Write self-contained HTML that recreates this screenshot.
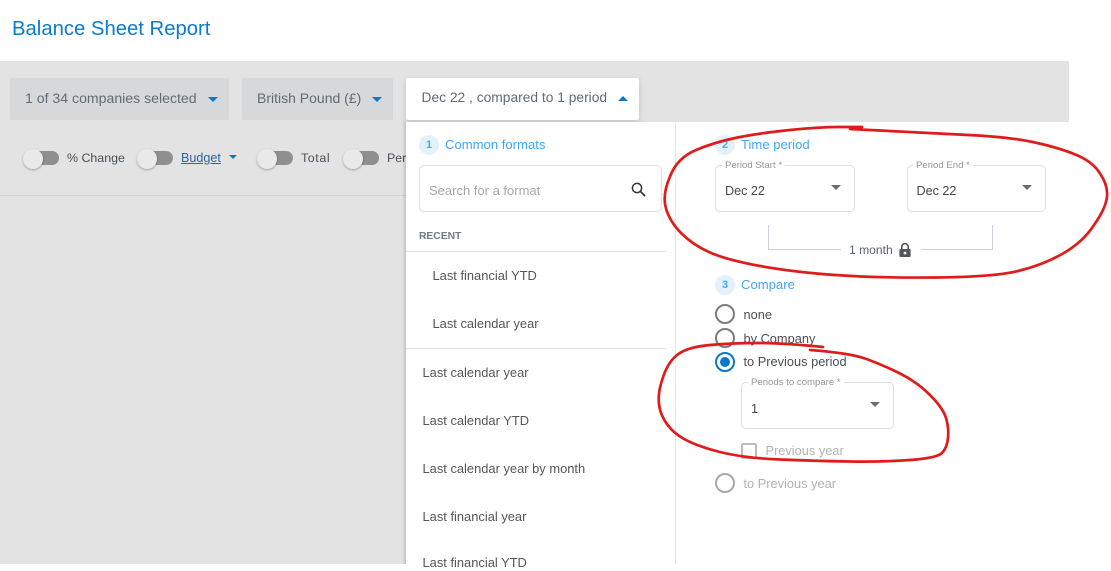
<!DOCTYPE html>
<html><head><meta charset="utf-8">
<style>
*{box-sizing:border-box}
html,body{margin:0;padding:0;width:1111px;height:564px;overflow:hidden;background:#fff;font-family:"Liberation Sans",sans-serif}
.a{position:absolute;white-space:nowrap}
.t{font-size:13px;line-height:16px}
.b{font-size:14px;color:#626b78}
.s{font-size:12.400px;color:#4a5058}
.tri{position:absolute;width:0;height:0;border-left:5px solid transparent;border-right:5px solid transparent;border-top:5px solid #0a78c8}
.btn{position:absolute;top:78px;height:42px;background:#d7d8da;border-radius:2px}
.sw{position:absolute;top:150px;width:36px;height:15px}
.sw i{position:absolute;left:10px;top:1px;width:26px;height:14px;border-radius:7px;background:#8f8f8f}
.sw b{position:absolute;left:0;top:-1px;width:20px;height:20px;border-radius:50%;background:#e9e9e9;box-shadow:0 1px 2px rgba(0,0,0,.3)}
.num{position:absolute;width:20px;height:20px;border-radius:50%;background:#e3f1fb;color:#4aa8ee;font-size:11px;font-weight:bold;line-height:20px;text-align:center}
.head{color:#42a5f5;font-size:13.100px;line-height:16px}
.fs{position:absolute;border:1px solid #dfdfe2;border-radius:5px;background:#fff}
.lab{position:absolute;background:#fff;color:#949494;font-size:9.600px;line-height:12px;padding:0 3px;white-space:nowrap}
.val{position:absolute;color:#484848;font-size:12.600px;line-height:16px}
.g{position:absolute;width:0;height:0;border-left:5.500px solid transparent;border-right:5.500px solid transparent;border-top:5.500px solid #6a6d72}
.item{color:#565656;font-size:12.900px;line-height:16px}
.r{position:absolute;width:20px;height:20px;border-radius:50%;border:2px solid #7c7c7c;background:#fff}
.rt{color:#4a4f56;font-size:12.800px;line-height:16px}
</style></head>
<body>
<div class="a" style="left:12px;top:16px;font-size:20.300px;line-height:26px;color:#0a7ccd">Balance Sheet Report</div>

<div class="a" style="left:0;top:61px;width:1069px;height:503px;background:#e3e3e3"></div>
<div class="a" style="left:0;top:195px;width:406px;height:1px;background:#d2d2d2"></div>

<div class="btn" style="left:10px;width:219px"></div>
<div class="a t b" style="left:25px;top:90px;font-size:14.100px">1 of 34 companies selected</div>
<div class="tri" style="left:208px;top:97px"></div>
<div class="btn" style="left:242px;width:151px"></div>
<div class="a t b" style="left:257px;top:90px">British Pound (£)</div>
<div class="tri" style="left:372px;top:97px"></div>

<div class="sw" style="left:23px"><i></i><b></b></div>
<div class="a t s" style="left:67px;top:150px">% Change</div>
<div class="sw" style="left:137px"><i></i><b></b></div>
<div class="a t s" style="left:181px;top:150px;color:#2868a8;text-decoration:underline;font-size:12.600px">Budget</div>
<div class="a" style="left:229px;top:155px;width:0;height:0;border-left:4.500px solid transparent;border-right:4.500px solid transparent;border-top:4.500px solid #0a78c8"></div>
<div class="sw" style="left:257px"><i></i><b></b></div>
<div class="a t s" style="left:301px;top:150px;letter-spacing:.6px">Total</div>
<div class="sw" style="left:343px"><i></i><b></b></div>
<div class="a t s" style="left:387px;top:150px">Per</div>

<!-- dropdown trigger -->
<div class="a" style="left:406px;top:78px;width:233px;height:42px;background:#fff;border-radius:2px;box-shadow:0 2px 6px rgba(0,0,0,.16)"></div>
<div class="a t b" style="left:421.500px;top:90px;font-size:13.800px">Dec 22 , compared to 1 period</div>
<div class="a" style="left:618px;top:96px;width:0;height:0;border-left:5px solid transparent;border-right:5px solid transparent;border-bottom:5px solid #0a78c8"></div>

<!-- panel -->
<div class="a" style="left:402px;top:122px;width:4px;height:442px;background:linear-gradient(to right,rgba(0,0,0,0),rgba(0,0,0,.14))"></div>
<div class="a" style="left:406px;top:122px;width:705px;height:442px;background:#fff"></div>
<div class="a" style="left:675px;top:122px;width:1px;height:442px;background:#e6e6e6"></div>

<div class="num" style="left:419px;top:135px">1</div>
<div class="a head" style="left:445px;top:137px">Common formats</div>
<div class="fs" style="left:419px;top:165px;width:243px;height:47px"></div>
<div class="a t" style="left:429px;top:182.500px;color:#a8a8a8">Search for a format</div>
<svg class="a" style="left:629px;top:180px" width="18" height="18" viewBox="0 0 18 18"><circle cx="8" cy="8" r="4.600" fill="none" stroke="#333" stroke-width="1.500"/><path d="M11.500 11.500L16 16" stroke="#333" stroke-width="1.700"/></svg>
<div class="a" style="left:419px;top:230px;color:#757b85;font-size:10.300px;line-height:14px;font-weight:bold">RECENT</div>
<div class="a" style="left:406px;top:251px;width:260px;height:1px;background:#e2e2e2"></div>
<div class="a item" style="left:432.500px;top:268px">Last financial YTD</div>
<div class="a item" style="left:432.500px;top:316px">Last calendar year</div>
<div class="a" style="left:406px;top:348px;width:260px;height:1px;background:#e2e2e2"></div>
<div class="a item" style="left:422.500px;top:365px">Last calendar year</div>
<div class="a item" style="left:422.500px;top:413px">Last calendar YTD</div>
<div class="a item" style="left:422.500px;top:461px">Last calendar year by month</div>
<div class="a item" style="left:422.500px;top:509px">Last financial year</div>
<div class="a item" style="left:422.500px;top:555px">Last financial YTD</div>

<!-- time period -->
<div class="num" style="left:715px;top:135px">2</div>
<div class="a head" style="left:741px;top:137px">Time period</div>
<div class="fs" style="left:715px;top:165px;width:140px;height:47px"></div>
<div class="lab" style="left:722px;top:160px">Period Start *</div>
<div class="val" style="left:725px;top:183px">Dec 22</div>
<div class="g" style="left:831px;top:185px"></div>
<div class="fs" style="left:907px;top:165px;width:139px;height:47px"></div>
<div class="lab" style="left:913px;top:160px">Period End *</div>
<div class="val" style="left:916.500px;top:183px">Dec 22</div>
<div class="g" style="left:1021.500px;top:185px"></div>

<div class="a" style="left:768px;top:225px;width:73px;height:25px;border-left:1px solid #cfcfd6;border-bottom:1px solid #cfcfd6"></div>
<div class="a" style="left:921px;top:225px;width:72px;height:25px;border-right:1px solid #cfcfd6;border-bottom:1px solid #cfcfd6"></div>
<div class="a" style="left:849px;top:242px;color:#566372;font-size:12.100px;line-height:16px">1 month</div>
<svg class="a" style="left:898px;top:242px" width="14" height="16" viewBox="0 0 14 16"><path d="M3 7V4.800a4 4 0 0 1 8 0V7h.6c.5 0 1 .5 1 1v6c0 .5-.5 1-1 1H2.400c-.5 0-1-.5-1-1V8c0-.5.5-1 1-1zM4.600 7h4.800V4.800a2.400 2.400 0 0 0-4.800 0z" fill="#50565f"/><circle cx="7" cy="11" r="1.400" fill="#fff"/></svg>

<!-- compare -->
<div class="num" style="left:715px;top:275px">3</div>
<div class="a head" style="left:741px;top:277px">Compare</div>
<div class="r" style="left:715px;top:304px"></div>
<div class="a rt" style="left:743.500px;top:307px">none</div>
<div class="r" style="left:715px;top:328px"></div>
<div class="a rt" style="left:743.500px;top:331px">by Company</div>
<div class="r" style="left:715px;top:352px;border-color:#0a78c8"></div>
<div class="a" style="left:720px;top:357px;width:10px;height:10px;border-radius:50%;background:#0a78c8"></div>
<div class="a rt" style="left:743.500px;top:354px">to Previous period</div>
<div class="fs" style="left:741px;top:382px;width:153px;height:47px"></div>
<div class="lab" style="left:748px;top:377px">Periods to compare *</div>
<div class="val" style="left:751px;top:401px">1</div>
<div class="g" style="left:869.500px;top:402px"></div>
<div class="a" style="left:741px;top:443px;width:16px;height:16px;border:2px solid #bbb;border-radius:2px"></div>
<div class="a rt" style="left:765.500px;top:443px;color:#b4b4b4">Previous year</div>
<div class="r" style="left:715px;top:473px;border-color:#a8a8a8"></div>
<div class="a rt" style="left:743.500px;top:476px;color:#b2b2b2">to Previous year</div>

<!-- red annotations -->
<svg class="a" style="left:0;top:0" width="1111" height="564" viewBox="0 0 1111 564" fill="none">
<path d="M862 127L840 127Q820 127 790 130Q760 133 737.500 137.500Q715 142 696 150Q677 158 670 176.500Q662 195 666 208.500Q670 222 681.500 233.500Q693 245 710 252.500Q727 260 760 266Q793 272 835 275Q877 278 935 277.500Q993 277 1018 271Q1043 265 1063 253.500Q1083 242 1094 225Q1106 208 1107 196.500Q1108 185 1100 173.500Q1093 162 1076.500 155Q1060 148 1035 142.500Q1010 137 968.500 135Q927 133 850 129" stroke="#e01b1b" stroke-width="2.700" stroke-linecap="round" stroke-linejoin="round"/>
<path d="M823 347Q783 343 758 343Q733 343 710 345Q687 347 677 355Q667 363 662 380.500Q656 398 661 413Q667 428 680 436.500Q693 445 718 451.500Q743 458 780 459.500Q817 461 850 461.500Q883 462 910 460Q937 458 942 453Q947 448 948 438Q949 428 946 418Q943 408 930 395Q917 382 900 373.500Q883 365 866.500 359Q850 353 810 350" stroke="#e01b1b" stroke-width="2.700" stroke-linecap="round" stroke-linejoin="round"/>
</svg>
</body></html>
